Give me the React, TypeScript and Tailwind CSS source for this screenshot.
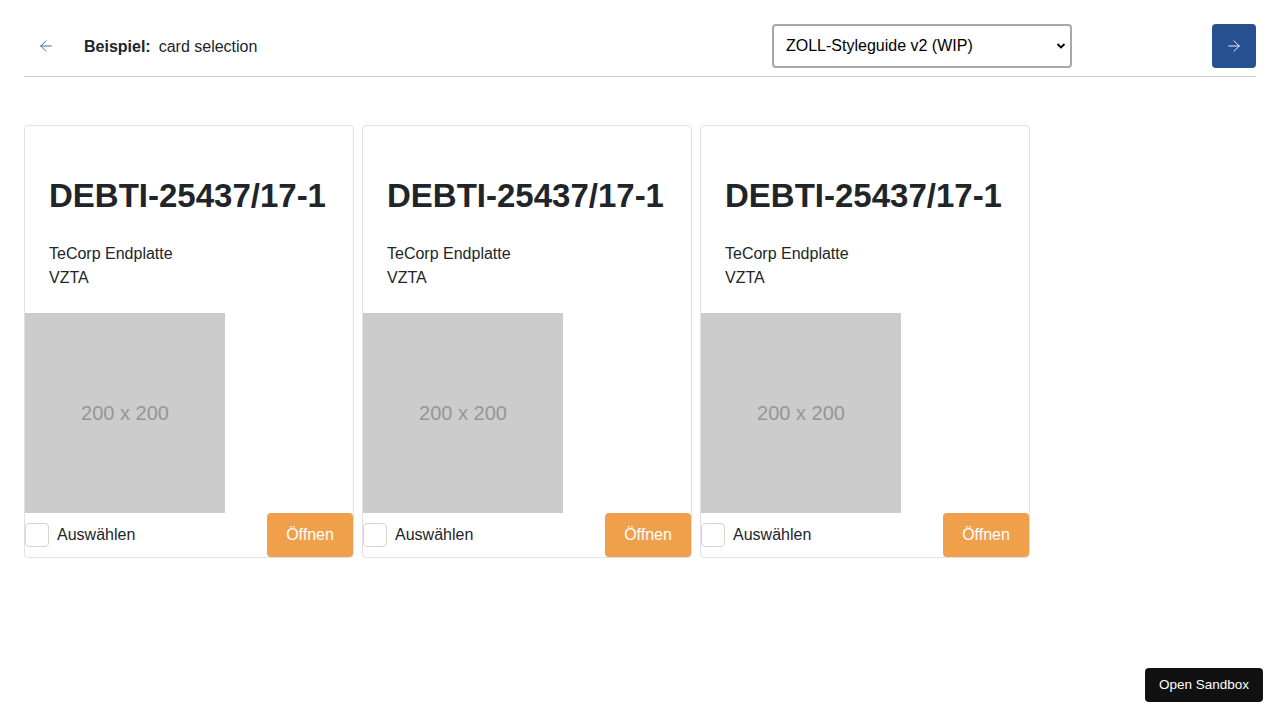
import { ArrowLeft, ArrowRight } from "lucide-react";

type Teil = {
  nummer: string;
  name: string;
  typ: string;
};

const teile: Teil[] = [
  { nummer: "DEBTI-25437/17-1", name: "TeCorp Endplatte", typ: "VZTA" },
  { nummer: "DEBTI-25437/17-1", name: "TeCorp Endplatte", typ: "VZTA" },
  { nummer: "DEBTI-25437/17-1", name: "TeCorp Endplatte", typ: "VZTA" },
];

function Karte({ teil }: { teil: Teil }) {
  return (
    <div className="w-[330px] border border-[#dee2e6] rounded-[4px] bg-white flex flex-col">
      <div className="px-6 pt-[46px]">
        <h2 className="text-[33px] leading-[48px] font-bold text-[#212529] whitespace-nowrap">
          {teil.nummer}
        </h2>
        <p className="mt-[22px] text-base leading-6 text-[#212529]">{teil.name}</p>
        <p className="text-base leading-6 text-[#212529]">{teil.typ}</p>
      </div>

      {/* Platzhalterbild */}
      <div className="mt-[23px] w-[200px] h-[200px] bg-[#cccccc] flex items-center justify-center">
        <span className="text-[20px] text-[#969696]">200 x 200</span>
      </div>

      <div className="flex items-center justify-between h-11">
        <label className="flex items-center gap-2 text-base text-[#212529]">
          <span className="w-6 h-6 border border-[#d4d4d4] rounded-[4px] bg-white" />
          Auswählen
        </label>
        <button className="h-11 w-[86px] rounded-[4px] bg-[#f0a04b] text-white text-base">
          Öffnen
        </button>
      </div>
    </div>
  );
}

export default function App() {
  return (
    <div className="min-h-[720px] bg-white px-6 pt-6 font-['Liberation_Sans',Arial,sans-serif] relative">
      {/* HEADER */}
      <div className="flex items-center h-11">
        <button className="w-11 h-11 flex items-center justify-center text-[#2a5aa0]">
          <ArrowLeft size={18} strokeWidth={1.2} />
        </button>
        <div className="ml-4 text-base text-[#212529] pt-px">
          <span className="font-bold">Beispiel:</span>
          <span className="ml-2">card selection</span>
        </div>
        <div className="ml-auto relative w-[300px] h-11">
          <select
            defaultValue="v2"
            className="appearance-none w-full h-11 border-2 border-[#a8a8a8] rounded-[4px] bg-white pl-3 pr-8 text-base text-black outline-none"
          >
            <option value="v2">ZOLL-Styleguide v2 (WIP)</option>
          </select>
          <svg
            className="absolute right-[6px] top-[18px] pointer-events-none"
            width="10"
            height="8"
            viewBox="0 0 10 8"
          >
            <path d="M1.5 2 L5 5.5 L8.5 2" fill="none" stroke="#000" strokeWidth="1.8" />
          </svg>
        </div>
        <button className="ml-[140px] w-11 h-11 rounded-[4px] bg-[#26508f] flex items-center justify-center text-white">
          <ArrowRight size={18} strokeWidth={1.2} />
        </button>
      </div>
      <div className="mt-2 border-b border-[#cccccc]" />

      {/* KARTEN */}
      <div className="mt-12 flex gap-2">
        {teile.map((t, i) => (
          <Karte key={i} teil={t} />
        ))}
      </div>

      <div className="absolute right-[17px] top-[668px] h-[34px] px-[14px] rounded-[4px] bg-[#111111] text-white text-[13.5px] flex items-center">
        Open Sandbox
      </div>
    </div>
  );
}
